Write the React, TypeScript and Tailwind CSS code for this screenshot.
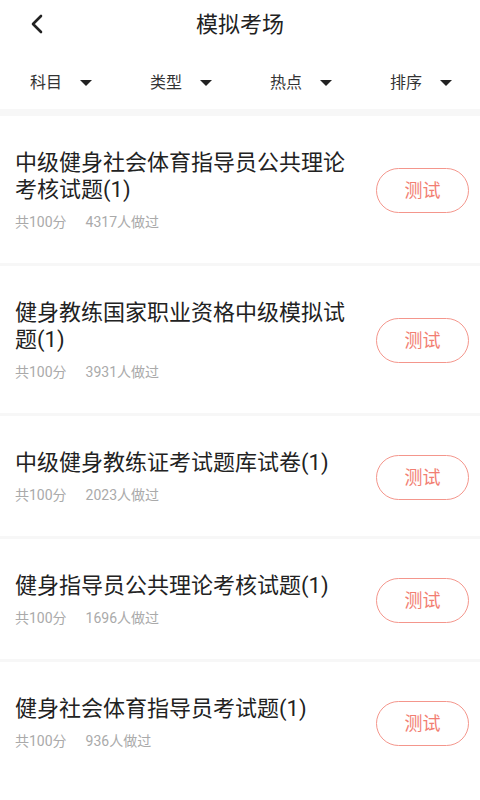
import React from "react";

const FONT = { fontFamily: 'Roboto, "Noto Sans CJK SC", "Noto Sans", sans-serif' };

const filters = ["科目", "类型", "热点", "排序"];

const exams = [
  { title: "中级健身社会体育指导员公共理论考核试题(1)", score: 100, count: 4317 },
  { title: "健身教练国家职业资格中级模拟试题(1)", score: 100, count: 3931 },
  { title: "中级健身教练证考试题库试卷(1)", score: 100, count: 2023 },
  { title: "健身指导员公共理论考核试题(1)", score: 100, count: 1696 },
  { title: "健身社会体育指导员考试题(1)", score: 100, count: 936 },
];

function BackIcon() {
  return (
    <svg width="14" height="20" viewBox="0 0 14 20" fill="none">
      <path d="M11 2 L3 10 L11 18" stroke="#222" strokeWidth="2.6" strokeLinecap="round" strokeLinejoin="round" />
    </svg>
  );
}

function Caret() {
  return <span className="ml-[18px] inline-block h-0 w-0 border-x-[6px] border-t-[6px] border-x-transparent border-t-[#222]" />;
}

export default function App() {
  return (
    <div className="w-[480px] bg-[#f7f7f7]" style={FONT}>
      <div className="bg-white">
        <div className="relative flex h-[48px] items-center justify-center">
          <button className="absolute left-[30px] top-[14px]">
            <BackIcon />
          </button>
          <h1 className="text-[22px] text-[#222]">模拟考场</h1>
        </div>
        <div className="grid h-[61px] grid-cols-4 items-center pt-[8px]">
          {filters.map((f) => (
            <div key={f} className="flex items-center pl-[30px] text-[16px] text-[#333]">
              {f}
              <Caret />
            </div>
          ))}
        </div>
      </div>

      <div className="mt-[7px] flex flex-col gap-[3px]">
        {exams.map((e) => (
          <div key={e.title} className="flex items-center justify-between bg-white pb-[31px] pl-[15px] pr-[11px] pt-[33px]">
            <div className="w-[340px]">
              <div className="text-[22px] leading-[27px] text-[#222]">{e.title}</div>
              <div className="mt-[9px] flex gap-[19px] text-[14px] leading-[20px] text-[#aaa]">
                <span>共{e.score}分</span>
                <span>{e.count}人做过</span>
              </div>
            </div>
            <button className="flex h-[45px] w-[93px] shrink-0 items-center justify-center rounded-full border-[1.5px] border-[#f4968c] text-[18px] text-[#f27e72]">
              测试
            </button>
          </div>
        ))}
      </div>
    </div>
  );
}
